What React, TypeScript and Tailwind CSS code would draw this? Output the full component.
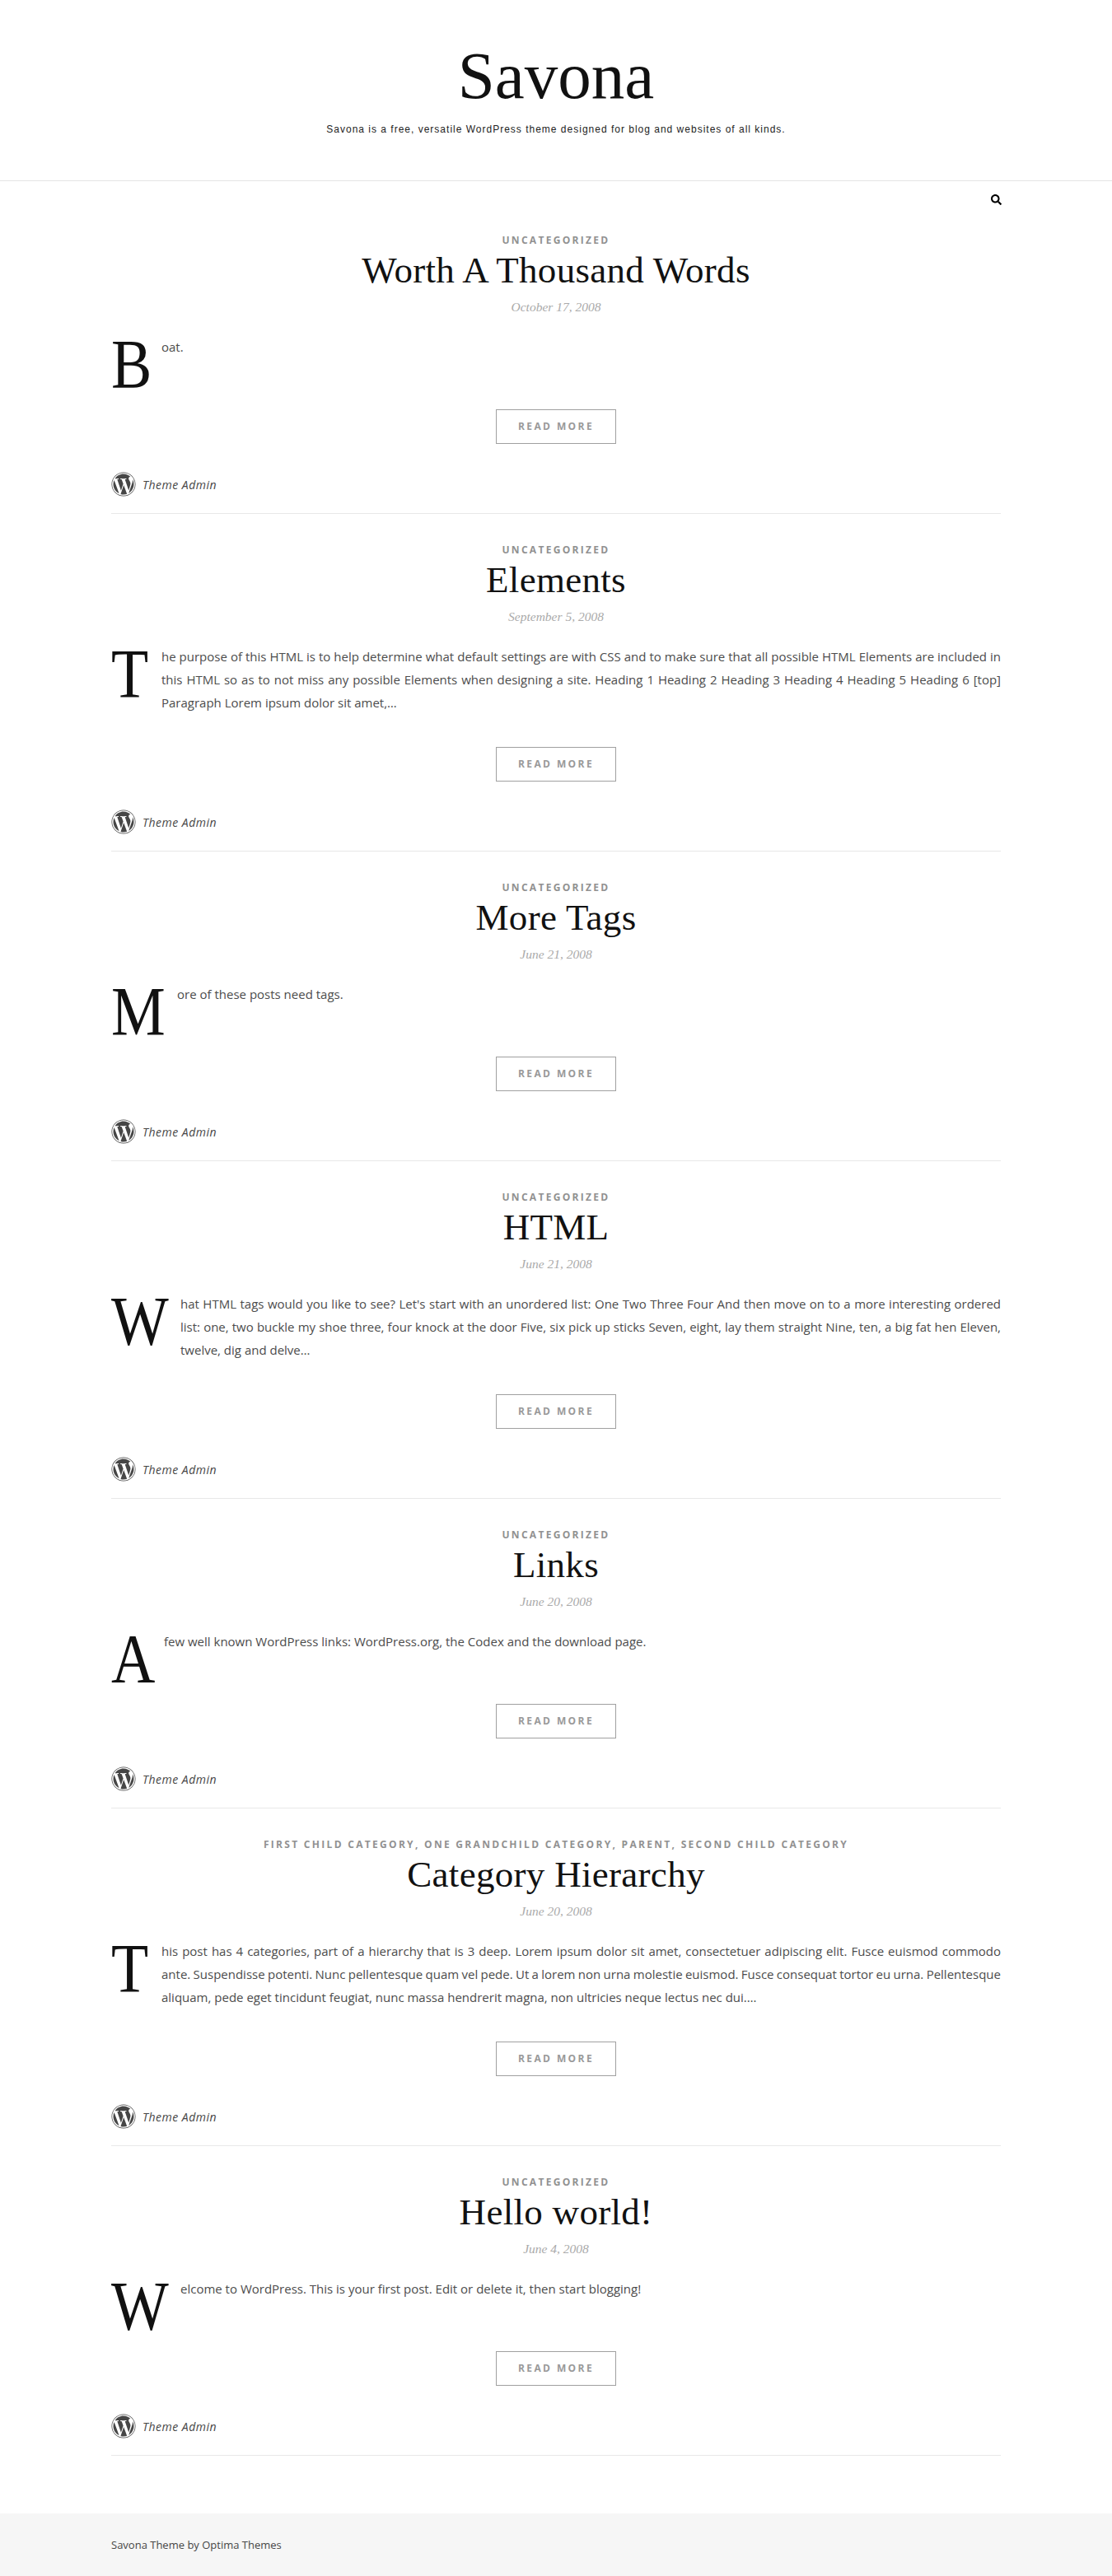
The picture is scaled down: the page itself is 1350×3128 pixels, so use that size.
import { FaSearch, FaWordpress } from "react-icons/fa";

type PostData = {
  cats: string;
  title: string;
  date: string;
  cap: string;
  capWidth: string;
  text: string;
  tight?: string;
  rest?: string;
};

const posts: PostData[] = [
  {
    cats: "Uncategorized",
    title: "Worth A Thousand Words",
    date: "October 17, 2008",
    cap: "B",
    capWidth: "w-[61px]",
    text: "oat.",
  },
  {
    cats: "Uncategorized",
    title: "Elements",
    date: "September 5, 2008",
    cap: "T",
    capWidth: "w-[61px]",
    text: "he purpose of this HTML is to help determine what default settings are with CSS and to make sure that all possible HTML Elements are included in this HTML so as to not miss any possible Elements when designing a site. Heading 1 Heading 2 Heading 3 Heading 4 Heading 5 Heading 6 [top] Paragraph Lorem ipsum dolor sit amet,…",
  },
  {
    cats: "Uncategorized",
    title: "More Tags",
    date: "June 21, 2008",
    cap: "M",
    capWidth: "w-[80px]",
    text: "ore of these posts need tags.",
  },
  {
    cats: "Uncategorized",
    title: "HTML",
    date: "June 21, 2008",
    cap: "W",
    capWidth: "w-[84px]",
    text: "hat HTML tags would you like to see? Let's start with an unordered list: One Two Three Four And then move on to a more interesting ordered list: one, two buckle my shoe three, four knock at the door Five, six pick up sticks Seven, eight, lay them straight Nine, ten, a big fat hen Eleven, twelve, dig and delve…",
  },
  {
    cats: "Uncategorized",
    title: "Links",
    date: "June 20, 2008",
    cap: "A",
    capWidth: "w-[64px]",
    text: "few well known WordPress links: WordPress.org, the Codex and the download page.",
  },
  {
    cats: "First Child Category, One Grandchild Category, Parent, Second Child Category",
    title: "Category Hierarchy",
    date: "June 20, 2008",
    cap: "T",
    capWidth: "w-[61px]",
    text: "his post has 4 categories, part of a hierarchy that is 3 deep. Lorem ipsum dolor sit amet, consectetuer adipiscing elit. Fusce euismod commodo ",
    tight: "ante. Suspendisse potenti. Nunc pellentesque quam vel pede. Ut a lorem non urna molestie euismod. Fusce consequat tortor eu urna. Pellentesque",
    rest: " aliquam, pede eget tincidunt feugiat, nunc massa hendrerit magna, non ultricies neque lectus nec dui.…",
  },
  {
    cats: "Uncategorized",
    title: "Hello world!",
    date: "June 4, 2008",
    cap: "W",
    capWidth: "w-[84px]",
    text: "elcome to WordPress. This is your first post. Edit or delete it, then start blogging!",
  },
];

function Post({ post }: { post: PostData }) {
  return (
    <article className="border-b border-[#e8e8e8] pb-[20px] mb-[35px]">
      <div className="text-center text-[12px] leading-[17px] font-bold uppercase tracking-[2.3px] text-[#919191]">
        {post.cats}
      </div>
      <h2 className="mt-[5px] text-center font-['Liberation_Serif',serif] text-[45px] leading-[46px] font-normal tracking-[.3px] text-[#111]">
        {post.title}
      </h2>
      <div className="mt-[10px] text-center font-['Liberation_Serif',serif] italic text-[15.5px] leading-[24px] text-[#aaaaaa]">
        {post.date}
      </div>
      <div className="mt-[22px] flow-root">
        <span
          className={`float-left h-[70px] ${post.capWidth} font-['Liberation_Serif',serif] text-[84px] leading-[71px] text-[#111]`}
        >
          <span className="inline-block origin-left scale-x-[.88]">{post.cap}</span>
        </span>
        <p className="pb-5 text-justify text-[15px] leading-[28px] text-[#4c4c4c]">
          {post.text}
          {post.tight && <span className="[word-spacing:-1.5px]">{post.tight}</span>}
          {post.rest}
        </p>
      </div>
      <div className="mt-[20px] flex justify-center">
        <a className="flex h-[42px] w-[146px] items-center justify-center border border-[#a0a0a0] text-[12px] font-bold uppercase tracking-[2.4px] text-[#999999]">
          Read More
        </a>
      </div>
      <div className="mt-[34px] flex items-center gap-[8px]">
        <FaWordpress className="h-[30px] w-[30px] text-[#464646]" />
        <span className="text-[14px] italic tracking-[.5px] text-[#464646]">Theme Admin</span>
      </div>
    </article>
  );
}

export default function App() {
  return (
    <div className="min-h-[3128px] bg-white font-['Open_Sans',sans-serif]">
      <header className="h-[220px] border-b border-[#e4e4e4] text-center">
        <h1 className="pt-[48px] font-['Liberation_Serif',serif] text-[81px] leading-[88px] font-normal text-[#111]">
          Savona
        </h1>
        <p className="mt-[12px] font-['Liberation_Sans',sans-serif] text-[12px] leading-[18px] tracking-[1px] text-[#222]">
          Savona is a free, versatile WordPress theme designed for blog and websites of all kinds.
        </p>
      </header>

      <div className="mx-auto w-[1080px]">
        <nav className="flex h-[63px] justify-end pt-[16px]">
          <FaSearch className="mr-[-1px] h-[13px] w-[13px] text-black" />
        </nav>
        {posts.map((post) => (
          <Post key={post.title} post={post} />
        ))}
      </div>

      <footer className="mt-[70px] h-[76px] bg-[#f6f6f6]">
        <div className="mx-auto w-[1080px] pt-[28px] text-[13px] leading-[20px] text-[#464646]">
          Savona Theme by Optima Themes
        </div>
      </footer>
    </div>
  );
}
